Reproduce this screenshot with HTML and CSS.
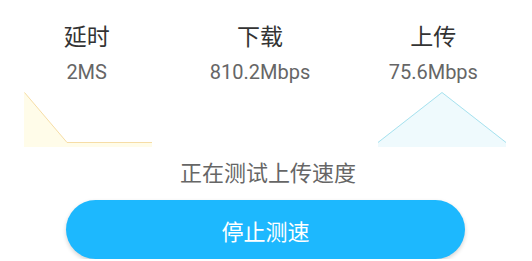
FILE: index.html
```html
<!DOCTYPE html>
<html lang="zh-CN">
<head>
    <meta charset="UTF-8">
    <meta name="viewport" content="width=device-width, initial-scale=1.0">
    <title>测速</title>
    <link rel="stylesheet" href="styles.css">
</head>
<body>
    <!-- Speed results -->
    <div class="stats">
        <div class="stat">
            <div class="stat-label">延时</div>
            <div class="stat-value">2MS</div>
        </div>
        <div class="stat">
            <div class="stat-label">下载</div>
            <div class="stat-value">810.2Mbps</div>
        </div>
        <div class="stat">
            <div class="stat-label">上传</div>
            <div class="stat-value">75.6Mbps</div>
        </div>
    </div>

    <!-- Mini charts -->
    <div class="charts">
        <svg class="chart" width="128" height="55" viewBox="0 0 128 55">
            <polygon points="0,0 43,50 128,50 128,55 0,55" fill="#fffce9"/>
            <polyline points="0.5,0.5 43,50.5 128,50.5" fill="none" stroke="#f6dda6" stroke-width="1"/>
        </svg>
        <svg class="chart hidden" width="128" height="55" viewBox="0 0 128 55"></svg>
        <svg class="chart" width="128" height="55" viewBox="0 0 128 55">
            <polygon points="0,50 64,0 128,50 128,55 0,55" fill="#effafd"/>
            <polyline points="0,50.5 64,0.5 128,50.5" fill="none" stroke="#a6e1ee" stroke-width="1"/>
        </svg>
    </div>

    <div class="status">正在测试上传速度</div>

    <button class="stop-button">停止测速</button>
</body>
</html>
```

FILE: styles.css
```css
body {
    font-family: Roboto, "Noto Sans CJK SC", sans-serif;
    margin: 0;
    padding: 0;
    background: #fff;
}

.stats {
    display: grid;
    grid-template-columns: repeat(3, 1fr);
    width: 520px;
    padding-top: 22px;
}

.stat {
    text-align: center;
}

.stat-label {
    font-size: 23px;
    line-height: 31px;
    color: #333;
}

.stat-value {
    font-size: 20px;
    line-height: 24px;
    margin-top: 7px;
    color: #666;
}

.charts {
    display: flex;
    justify-content: space-between;
    padding: 0 26px 0 24px;
    margin-top: 8px;
    height: 55px;
}

.chart {
    display: block;
}

.chart.hidden {
    visibility: hidden;
}

.status {
    font-size: 22px;
    line-height: 28px;
    margin-top: 13px;
    text-align: center;
    padding-left: 4px;
    color: #666;
}

.stop-button {
    display: block;
    margin: 12px 0 0 66px;
    width: 399px;
    height: 59px;
    border: none;
    border-radius: 30px;
    background-color: #1db8fe;
    color: #fff;
    font-family: Roboto, "Noto Sans CJK SC", sans-serif;
    font-size: 22px;
    box-shadow: 0 2px 4px rgba(0, 0, 0, 0.18);
    cursor: pointer;
}
```
